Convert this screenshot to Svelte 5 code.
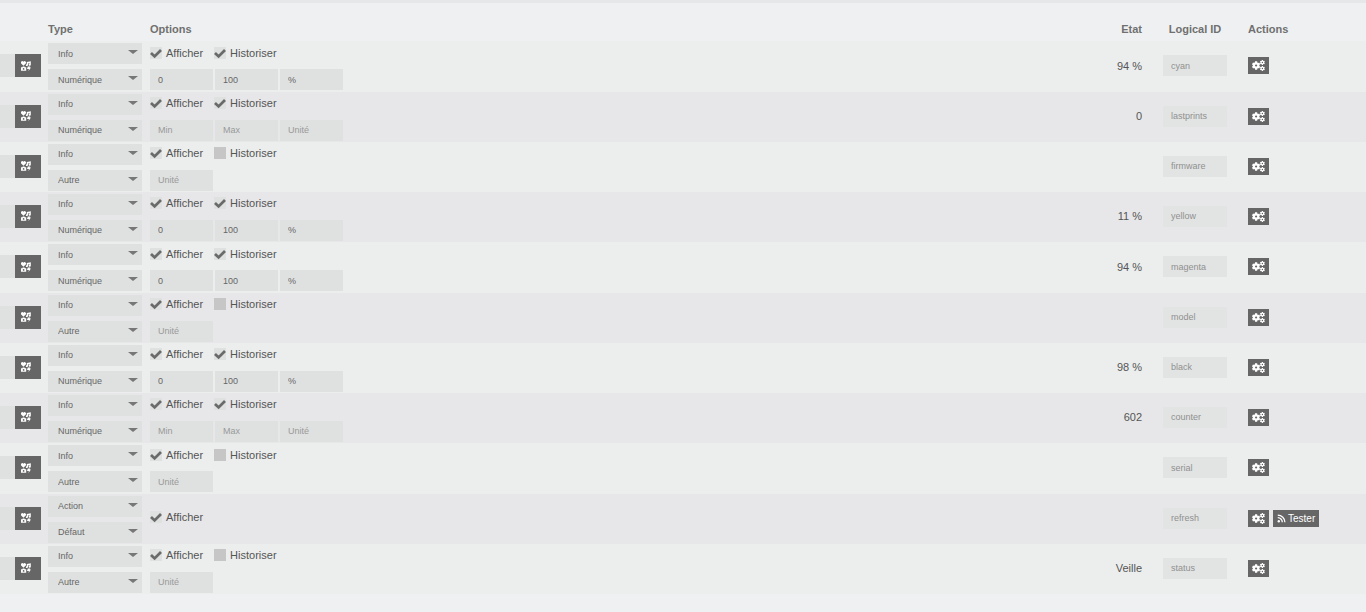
<script lang="ts">
  type Field = { label: string; value: string };
  type Command = {
    id: string;
    type: string;
    subtype: string;
    historize?: boolean;
    fields: Field[];
    state: string;
  };

  const range = (): Field[] => [
    { label: 'Min', value: '0' },
    { label: 'Max', value: '100' },
    { label: 'Unité', value: '%' }
  ];
  const emptyRange = (): Field[] => [
    { label: 'Min', value: '' },
    { label: 'Max', value: '' },
    { label: 'Unité', value: '' }
  ];
  const unit = (): Field[] => [{ label: 'Unité', value: '' }];

  let commands: Command[] = $state([
    { id: 'cyan', type: 'Info', subtype: 'Numérique', historize: true, fields: range(), state: '94 %' },
    { id: 'lastprints', type: 'Info', subtype: 'Numérique', historize: true, fields: emptyRange(), state: '0' },
    { id: 'firmware', type: 'Info', subtype: 'Autre', historize: false, fields: unit(), state: '' },
    { id: 'yellow', type: 'Info', subtype: 'Numérique', historize: true, fields: range(), state: '11 %' },
    { id: 'magenta', type: 'Info', subtype: 'Numérique', historize: true, fields: range(), state: '94 %' },
    { id: 'model', type: 'Info', subtype: 'Autre', historize: false, fields: unit(), state: '' },
    { id: 'black', type: 'Info', subtype: 'Numérique', historize: true, fields: range(), state: '98 %' },
    { id: 'counter', type: 'Info', subtype: 'Numérique', historize: true, fields: emptyRange(), state: '602' },
    { id: 'serial', type: 'Info', subtype: 'Autre', historize: false, fields: unit(), state: '' },
    { id: 'refresh', type: 'Action', subtype: 'Défaut', fields: [], state: '' },
    { id: 'status', type: 'Info', subtype: 'Autre', historize: false, fields: unit(), state: 'Veille' }
  ]);

  const types = ['Info', 'Action'];
  const subtypes: Record<string, string[]> = {
    Info: ['Numérique', 'Binaire', 'Autre'],
    Action: ['Défaut', 'Curseur', 'Message', 'Couleur', 'Liste']
  };

  function setType(cmd: Command, type: string) {
    cmd.type = type;
    cmd.subtype = subtypes[type][0];
  }
</script>

{#snippet tick(on: boolean)}
  <svg class="tick" class:off={!on} viewBox="0 0 12 12" aria-hidden="true">
    {#if on}<path d="M1 6 L4.6 9.4 L11 3" />{/if}
  </svg>
{/snippet}

<main>
  <table>
    <colgroup>
      <col class="col-name" />
      <col class="col-type" />
      <col />
      <col class="col-state" />
      <col class="col-id" />
      <col class="col-actions" />
    </colgroup>
    <thead>
      <tr>
        <th></th>
        <th>Type</th>
        <th>Options</th>
        <th class="state">Etat</th>
        <th class="logical"><span>Logical ID</span></th>
        <th>Actions</th>
      </tr>
    </thead>
    <tbody>
      {#each commands as cmd (cmd.id)}
        <tr>
          <td class="raised">
            <div class="name">
              <input type="text" aria-label="Nom" />
              <button class="icon-btn" aria-label="Icône">
                <svg viewBox="0 0 20 20" aria-hidden="true">
                  <path d="M4.9 9.4 L.3 5 A2.7 2.7 0 0 1 4.9 1.4 A2.7 2.7 0 0 1 9.5 5 Z" />
                  <path d="M11.6 1.8 L19.6 .4 V7.4 A2.2 1.9 0 1 1 17.2 5.6 V4.4 L14 5 V8.2 A2.2 1.9 0 1 1 11.6 6.4 Z" />
                  <path fill-rule="evenodd" d="M0 12.4 H2.6 L3.6 11 H6.8 L7.8 12.4 H10.4 V19.4 H0 Z M5.2 14.1 A1.7 1.7 0 1 0 5.2 17.5 A1.7 1.7 0 1 0 5.2 14.1 Z" />
                  <path d="M13.6 10.8 H18.4 L17.4 13 H20 L15 20 L15.8 16 H12 Z" />
                </svg>
              </button>
            </div>
          </td>
          <td>
            <div class="selects">
              <span class="select">
                <select aria-label="Type" value={cmd.type} onchange={(e) => setType(cmd, e.currentTarget.value)}>
                  {#each types as type}
                    <option>{type}</option>
                  {/each}
                </select>
              </span>
              <span class="select">
                <select aria-label="Sous-type" bind:value={cmd.subtype}>
                  {#each subtypes[cmd.type] as subtype}
                    <option>{subtype}</option>
                  {/each}
                </select>
              </span>
            </div>
          </td>
          <td>
            <div class="options">
              <div class="checks">
                <label>
                  <input type="checkbox" checked />
                  {@render tick(true)}
                  Afficher
                </label>
                {#if cmd.historize !== undefined}
                  <label>
                    <input type="checkbox" bind:checked={cmd.historize} />
                    {@render tick(cmd.historize)}
                    Historiser
                  </label>
                {/if}
              </div>
              {#if cmd.fields.length}
                <div class="fields">
                  {#each cmd.fields as field}
                    <input type="text" placeholder={field.label} aria-label={field.label} bind:value={field.value} />
                  {/each}
                </div>
              {/if}
            </div>
          </td>
          <td class="state raised">{cmd.state}</td>
          <td class="raised"><input class="logical-id" type="text" aria-label="Logical ID" value={cmd.id} readonly /></td>
          <td class="raised">
            <div class="actions">
              <button aria-label="Configurer">
                <svg class="cogs" viewBox="0 0 26 22" aria-hidden="true">
                  <circle cx="8.2" cy="11" r="4.4" />
                  <path class="teeth" d="M8.2 2.6 V6 M8.2 16 V19.4 M1 6.8 L4 8.5 M12.4 13.5 L15.4 15.2 M1 15.2 L4 13.5 M12.4 8.5 L15.4 6.8" />
                  <circle class="small" cx="20.8" cy="5" r="2.7" />
                  <circle class="small" cx="20.8" cy="17" r="2.7" />
                  <path class="small-teeth" d="M20.8 0 V2 M20.8 8 V10 M16.5 2.6 L18.4 3.6 M23.2 6.4 L25.1 7.4 M16.5 7.4 L18.4 6.4 M23.2 3.6 L25.1 2.6 M20.8 12 V14 M20.8 20 V22 M16.5 14.6 L18.4 15.6 M23.2 18.4 L25.1 19.4 M16.5 19.4 L18.4 18.4 M23.2 15.6 L25.1 14.6" />
                </svg>
              </button>
              {#if cmd.type === 'Action'}
                <button>
                  <svg class="rss" viewBox="0 0 18 18" aria-hidden="true">
                    <circle cx="3.6" cy="14.4" r="2.4" />
                    <path d="M1.5 7.4 A9 9 0 0 1 10.6 16.5 M1.5 2.2 A14.3 14.3 0 0 1 15.8 16.5" />
                  </svg>
                  Tester
                </button>
              {/if}
            </div>
          </td>
        </tr>
      {/each}
    </tbody>
  </table>
</main>

<style>
  :global(body) {
    background: #eff0f2;
  }

  main {
    border-top: 3px solid #e6e7e8;
    color: #555;
    font-family: 'Liberation Sans', Arial, sans-serif;
    font-size: 11px;
    line-height: 16px;
  }

  input,
  select,
  button {
    box-sizing: border-box;
    margin: 0;
    border: 0;
    border-radius: 0;
    font-family: inherit;
  }

  table {
    width: 100%;
    table-layout: fixed;
    border-collapse: collapse;
  }

  .col-name {
    width: 48px;
  }

  .col-type {
    width: 102px;
  }

  .col-state {
    width: 90px;
  }

  .col-id {
    width: 85px;
  }

  .col-actions {
    width: 118px;
  }

  th,
  td {
    padding: 0;
    text-align: left;
  }

  th {
    height: 38px;
    padding-top: 14px;
    box-sizing: border-box;
    color: #707070;
    font-weight: 700;
  }

  td.raised {
    padding-bottom: 2px;
  }

  th.state,
  td.state {
    padding-right: 21px;
    text-align: right;
  }

  th.logical span {
    display: block;
    width: 64px;
    text-align: center;
    white-space: nowrap;
  }

  tbody tr {
    height: 50px;
    background: #ebeeed;
  }

  tbody tr:nth-child(4n + 1) {
    height: 51px;
  }

  tbody tr:nth-child(even) {
    background: #e7e7e9;
  }

  .name {
    display: flex;
    width: 41px;
  }

  .name input {
    flex: 1;
    min-width: 0;
    height: 23px;
    padding: 0;
    background: #dfe1e0;
  }

  button {
    display: inline-flex;
    align-items: center;
    justify-content: center;
    background: #666;
    color: #fff;
    cursor: pointer;
  }

  .icon-btn {
    width: 26px;
    height: 23px;
    padding: 0 4px 0 0;
  }

  .icon-btn svg {
    width: 10px;
    height: 10px;
    fill: #fff;
  }

  .selects,
  .options {
    display: flex;
    flex-direction: column;
    gap: 5px;
  }

  .select {
    position: relative;
    display: flex;
    width: 94px;
  }

  .select::after {
    content: '';
    position: absolute;
    top: 7px;
    right: 4px;
    border: solid transparent;
    border-width: 4px 5px 0;
    border-top-color: #777;
    pointer-events: none;
  }

  select,
  .fields input,
  .logical-id {
    height: 21px;
    background: #dfe1e0;
    color: #666;
    font-size: 9px;
  }

  select {
    width: 100%;
    padding: 0 20px 0 10px;
    appearance: none;
  }

  .checks {
    display: flex;
    align-items: center;
    gap: 11px;
    box-sizing: border-box;
    height: 21px;
    padding-bottom: 2px;
  }

  .checks:only-child {
    padding-bottom: 5px;
  }

  label {
    display: flex;
    align-items: center;
    gap: 4px;
    cursor: pointer;
  }

  label input {
    position: absolute;
    opacity: 0;
  }

  .tick {
    width: 12px;
    height: 12px;
    background: #dfe1e0;
    fill: none;
    stroke: #6a6a6a;
    stroke-width: 2.8;
  }

  .tick.off {
    background: #c6c6c6;
  }

  .fields {
    display: flex;
    gap: 2px;
  }

  .fields input {
    width: 63px;
    padding: 0 8px;
  }

  .fields input::placeholder {
    color: #999;
    opacity: 1;
  }

  .logical-id {
    display: block;
    width: 64px;
    padding: 0 8px;
    background: #e2e4e3;
    color: #909090;
  }

  .actions {
    display: flex;
    gap: 4px;
  }

  .actions button {
    height: 17px;
    padding: 0 4px;
    gap: 2px;
    font-size: 10px;
  }

  .cogs {
    width: 13px;
    height: 11px;
    fill: none;
    stroke: #fff;
    stroke-width: 4.4;
  }

  .cogs .small {
    stroke-width: 2.6;
  }

  .cogs .small-teeth {
    stroke-width: 2.2;
  }

  .rss {
    width: 9px;
    height: 9px;
    fill: none;
    stroke: #fff;
    stroke-width: 2.6;
  }

  .rss circle {
    fill: #fff;
    stroke: none;
  }
</style>
